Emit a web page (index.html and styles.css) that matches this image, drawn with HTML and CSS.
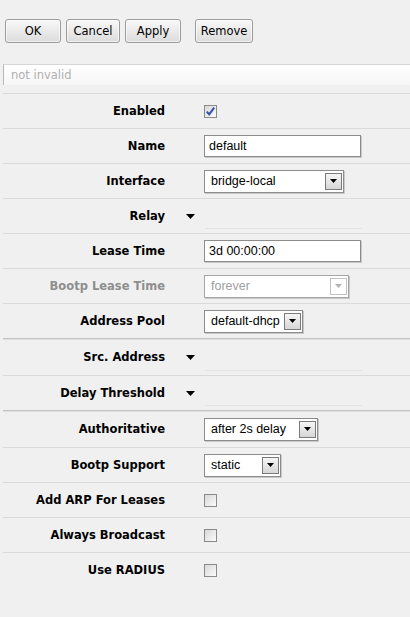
FILE: index.html
```html
<!DOCTYPE html>
<html>
<head>
<meta charset="utf-8">
<title>DHCP Server</title>
<link rel="stylesheet" href="styles.css">
</head>
<body>
<div class="toolbar">
  <button class="btn">OK</button>
  <button class="btn btn-cancel">Cancel</button>
  <button class="btn">Apply</button>
  <button class="btn btn-remove">Remove</button>
</div>
<div class="status">not invalid</div>
<div class="form">
  <div class="row">
    <div class="label">Enabled</div><div class="mid"></div>
    <div class="ctl"><span class="check"><svg width="11" height="11" viewBox="0 0 11 11"><path d="M1.8 5.6 L4.2 8.4 L9.2 1.6" fill="none" stroke="#3354a6" stroke-width="2"/></svg></span></div>
  </div>
  <div class="row">
    <div class="label">Name</div><div class="mid"></div>
    <div class="ctl"><div class="input">default</div></div>
  </div>
  <div class="row">
    <div class="label">Interface</div><div class="mid"></div>
    <div class="ctl"><div class="select w-iface"><span>bridge-local</span><span class="arrow"><svg width="7" height="4" viewBox="0 0 7 4"><polygon points="0,0 7,0 3.5,4" fill="#000"/></svg></span></div></div>
  </div>
  <div class="row">
    <div class="label">Relay</div>
    <div class="mid"><svg class="caret" width="9" height="5" viewBox="0 0 9 5"><polygon points="0,0 9,0 4.5,5" fill="#000"/></svg></div>
    <div class="ctl fold"></div>
  </div>
  <div class="row">
    <div class="label">Lease Time</div><div class="mid"></div>
    <div class="ctl"><div class="input">3d 00:00:00</div></div>
  </div>
  <div class="row">
    <div class="label label-dim">Bootp Lease Time</div><div class="mid"></div>
    <div class="ctl"><div class="select disabled w-bootp"><span>forever</span><span class="arrow"><svg width="7" height="4" viewBox="0 0 7 4"><polygon points="0,0 7,0 3.5,4" fill="#b4b4b4"/></svg></span></div></div>
  </div>
  <div class="row">
    <div class="label">Address Pool</div><div class="mid"></div>
    <div class="ctl"><div class="select w-pool"><span>default-dhcp</span><span class="arrow"><svg width="7" height="4" viewBox="0 0 7 4"><polygon points="0,0 7,0 3.5,4" fill="#000"/></svg></span></div></div>
  </div>
  <div class="row sect">
    <div class="label">Src. Address</div>
    <div class="mid"><svg class="caret" width="9" height="5" viewBox="0 0 9 5"><polygon points="0,0 9,0 4.5,5" fill="#000"/></svg></div>
    <div class="ctl fold"></div>
  </div>
  <div class="row">
    <div class="label">Delay Threshold</div>
    <div class="mid"><svg class="caret" width="9" height="5" viewBox="0 0 9 5"><polygon points="0,0 9,0 4.5,5" fill="#000"/></svg></div>
    <div class="ctl fold"></div>
  </div>
  <div class="row sect">
    <div class="label">Authoritative</div><div class="mid"></div>
    <div class="ctl"><div class="select w-auth"><span>after 2s delay</span><span class="arrow"><svg width="7" height="4" viewBox="0 0 7 4"><polygon points="0,0 7,0 3.5,4" fill="#000"/></svg></span></div></div>
  </div>
  <div class="row">
    <div class="label">Bootp Support</div><div class="mid"></div>
    <div class="ctl"><div class="select w-bsup"><span>static</span><span class="arrow"><svg width="7" height="4" viewBox="0 0 7 4"><polygon points="0,0 7,0 3.5,4" fill="#000"/></svg></span></div></div>
  </div>
  <div class="row">
    <div class="label">Add ARP For Leases</div><div class="mid"></div>
    <div class="ctl"><span class="check"></span></div>
  </div>
  <div class="row">
    <div class="label">Always Broadcast</div><div class="mid"></div>
    <div class="ctl"><span class="check"></span></div>
  </div>
  <div class="row">
    <div class="label">Use RADIUS</div><div class="mid"></div>
    <div class="ctl"><span class="check"></span></div>
  </div>
</div>
</body>
</html>
```

FILE: styles.css
```css
* { box-sizing: border-box; }
html, body { margin: 0; padding: 0; background: #f0f0f0; }
body {
  font-family: "DejaVu Sans", Verdana, sans-serif;
  font-size: 11px;
  color: #000;
  width: 410px;
  height: 617px;
  overflow: hidden;
}
.toolbar { display: flex; gap: 5px; padding: 19px 0 0 5px; }
.btn {
  height: 24px;
  width: 56px;
  padding: 0;
  border: 1px solid #9c9c9c;
  border-radius: 3px;
  background: linear-gradient(#f8f8f8, #dcdcdc);
  font: 11.5px "DejaVu Sans", Verdana, sans-serif;
  color: #000;
  box-shadow: inset 0 0 0 1px rgba(255,255,255,0.6);
}
.btn-cancel { width: 54px; }
.btn-remove { width: 58px; margin-left: 9px; }
.status {
  margin: 21px 0 0 3px;
  height: 21px;
  border-left: 1px solid #b8b8b8;
  border-top: 1px solid #d6d6d6;
  background: linear-gradient(#ffffff, #f6f6f6);
  color: #b0b0b0;
  padding-left: 7px;
  line-height: 20px;
  font-size: 11.5px;
}
.form { margin: 8px 0 0 3px; }
.row {
  display: grid;
  grid-template-columns: 162px 39px 1fr;
  align-items: center;
  height: 35px;
  border-top: 1px solid #dadada;
}
.row.sect {
  height: 37px;
  border-top: 1px solid #c4c4c4;
  box-shadow: inset 0 1px 0 #dedede;
}
.label { text-align: right; font-weight: bold; font-size: 11.5px; color: #000; white-space: nowrap; }
.label-dim { color: #8e8e8e; }
.mid { display: flex; align-items: center; }
.caret { margin-left: 21px; display: block; }
.ctl { display: flex; align-items: center; }
.fold {
  align-self: end;
  height: 1px;
  width: 157px;
  margin: 0 0 4px 1px;
  background: #e3e3e3;
}
.input {
  width: 157px;
  height: 22px;
  border: 1px solid #8c8c8c;
  background: #fff;
  box-shadow: 1px 1px 0 #c8c8c8;
  font: 12.5px "Liberation Sans", Arial, sans-serif;
  line-height: 20px;
  padding: 0 4px;
}
.select {
  height: 23px;
  border: 1px solid #8c8c8c;
  background: #fff;
  box-shadow: 1px 1px 0 #c8c8c8;
  font: 12.5px "Liberation Sans", Arial, sans-serif;
  display: flex;
  align-items: center;
  justify-content: space-between;
  padding: 0 1px 0 6px;
  white-space: nowrap;
}
.arrow {
  width: 17px;
  height: 17px;
  border: 1px solid #7a7a7a;
  background: linear-gradient(#f6f6f6, #d6d6d6);
  display: flex;
  align-items: center;
  justify-content: center;
  flex: none;
}
.arrow svg { display: block; }
.select.disabled { border-color: #a6a6a6; color: #a0a0a0; }
.select.disabled .arrow { border-color: #c2c2c2; background: #fff; }
.w-iface { width: 140px; }
.w-bootp { width: 145px; }
.w-pool { width: 99px; }
.w-auth { width: 114px; }
.w-bsup { width: 77px; }
.check {
  width: 13px;
  height: 13px;
  border: 1px solid #8a8a8a;
  background: linear-gradient(135deg, #d8d8d8, #fbfbfb);
  display: flex;
  align-items: center;
  justify-content: center;
}
.check svg { display: block; }
```
